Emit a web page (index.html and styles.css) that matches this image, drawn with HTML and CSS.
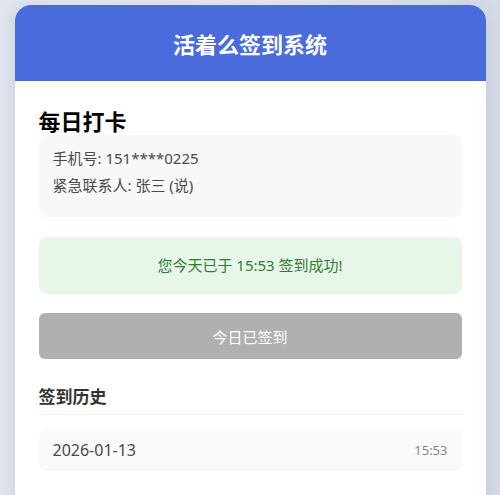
FILE: index.html
```html
<!DOCTYPE html>
<html lang="zh-CN">
<head>
<meta charset="utf-8">
<title>活着么签到系统</title>
<link rel="stylesheet" href="styles.css">
</head>
<body>
<div class="card">
  <header class="card-header">活着么签到系统</header>
  <main class="card-body">
    <h2 class="section-title">每日打卡</h2>
    <div class="info-box">
      <p class="info-line">手机号: 151****0225</p>
      <p class="info-line">紧急联系人: 张三 (说)</p>
    </div>
    <div class="status-box">您今天已于 15:53 签到成功!</div>
    <button class="checkin-btn" disabled>今日已签到</button>
    <h3 class="history-title">签到历史</h3>
    <ul class="history-list">
      <li class="history-item"><span class="history-date">2026-01-13</span><span class="history-time">15:53</span></li>
    </ul>
  </main>
</div>
</body>
</html>
```
FILE: styles.css
```css
html, body {
  margin: 0;
  padding: 0;
  height: 100%;
}
body {
  background: linear-gradient(90deg, #dfe4ed 0%, #e6e9f0 50%, #d4dbe7 100%);
  font-family: "Noto Sans", "Noto Sans CJK SC", sans-serif;
  overflow: hidden;
}
.card {
  width: 471px;
  margin: 5px auto 0;
  background: #ffffff;
  border-radius: 16px 16px 0 0;
  box-shadow: 0 4px 16px rgba(60, 80, 120, 0.15);
  min-height: 600px;
}
.card-header {
  height: 76px;
  background: #4a6bdc;
  color: #ffffff;
  border-radius: 16px 16px 0 0;
  display: flex;
  align-items: center;
  justify-content: center;
  font-size: 22px;
  font-weight: 700;
  font-family: "Noto Sans CJK SC", sans-serif;
}
.card-body {
  padding: 24px 24px;
}
.section-title {
  margin: 0;
  font-size: 22px;
  line-height: 30px;
  font-weight: 700;
  color: #000;
  font-family: "Noto Sans CJK SC", sans-serif;
}
.info-box {
  background: #f8f8f8;
  border-radius: 8px;
  padding: 10px 14px 18px;
}
.info-line {
  margin: 0;
  font-size: 15px;
  line-height: 27px;
  color: #4a4a4a;
}
.status-box {
  margin-top: 20px;
  background: #e8f5e9;
  border-radius: 8px;
  color: #2e7d32;
  font-size: 15px;
  line-height: 21px;
  padding: 18px 14px;
  text-align: center;
}
.checkin-btn {
  display: block;
  width: 100%;
  margin-top: 19px;
  height: 46px;
  border: none;
  border-radius: 6px;
  background: #b0b0b0;
  color: #ffffff;
  font-family: inherit;
  font-size: 15px;
}
.history-title {
  margin: 25px 0 0;
  padding-bottom: 6px;
  border-bottom: 1px solid #eeeeee;
  font-size: 17px;
  line-height: 24px;
  font-weight: 700;
  color: #333;
  font-family: "Noto Sans CJK SC", sans-serif;
}
.history-list {
  list-style: none;
  margin: 14px 0 0;
  padding: 0;
}
.history-item {
  display: flex;
  justify-content: space-between;
  align-items: center;
  height: 42px;
  padding: 0 14px;
  background: #f9f9f9;
  border-radius: 8px;
}
.history-date {
  font-size: 16px;
  color: #4a4a4a;
}
.history-time {
  font-size: 13px;
  color: #888;
}
```
